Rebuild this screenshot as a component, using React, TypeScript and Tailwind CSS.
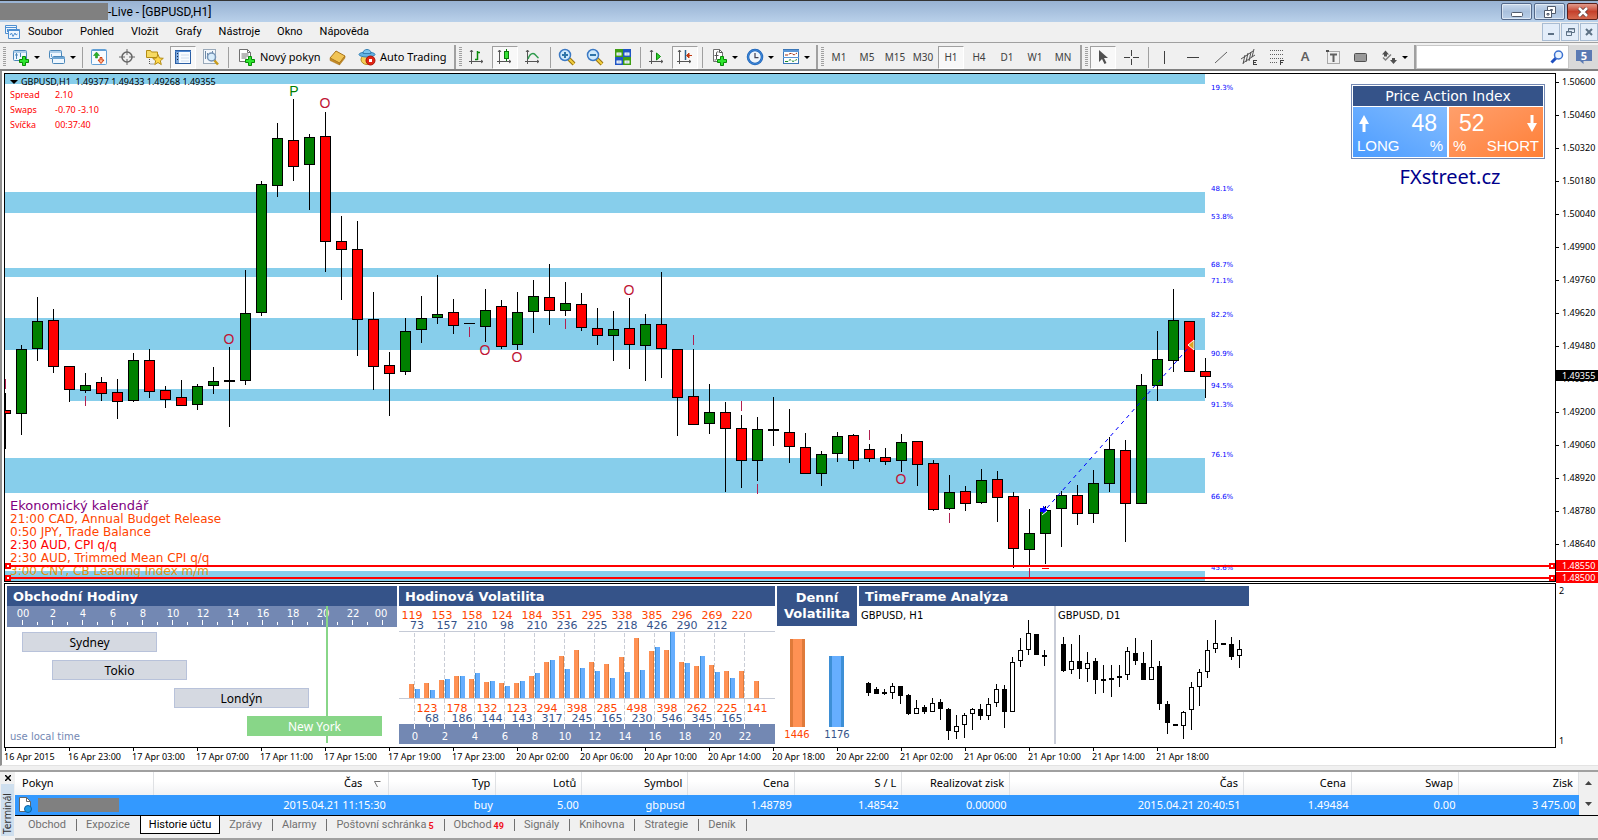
import React from 'react';

type Candle = [high: number, top: number, bottom: number, low: number, up: 0 | 1];

const menuItems = ['Soubor', 'Pohled', 'Vložit', 'Grafy', 'Nástroje', 'Okno', 'Nápověda'];
const timeframes = ['M1', 'M5', 'M15', 'M30', 'H1', 'H4', 'D1', 'W1', 'MN'];

const candles: Candle[] = [
  [393, 410, 414, 449, 0], [345, 349, 414, 435, 1], [297, 321, 349, 361, 1], [309, 320, 367, 373, 0],
  [366, 366, 390, 402, 0], [373, 385, 391, 393, 1], [377, 382, 394, 401, 0], [379, 392, 402, 419, 0],
  [353, 360, 401, 402, 1], [349, 360, 392, 398, 0], [386, 390, 400, 408, 0], [380, 397, 406, 406, 0],
  [384, 386, 405, 410, 1], [367, 381, 386, 394, 1], [347, 380, 382, 427, 1], [270, 313, 381, 385, 1],
  [181, 184, 313, 316, 1], [123, 138, 186, 197, 1], [99, 140, 167, 181, 0], [134, 137, 165, 210, 1],
  [112, 136, 242, 272, 0], [216, 241, 250, 300, 0], [221, 249, 320, 356, 0], [292, 319, 367, 390, 0],
  [352, 365, 374, 416, 0], [318, 331, 372, 375, 1], [296, 318, 330, 343, 1], [275, 314, 318, 324, 1],
  [299, 312, 326, 334, 0], [323, 323, 324, 324, 1], [289, 310, 327, 342, 1], [300, 306, 347, 349, 0],
  [292, 312, 345, 350, 1], [280, 296, 312, 333, 1], [264, 297, 311, 325, 0], [282, 303, 311, 316, 1],
  [293, 304, 328, 331, 0], [308, 328, 336, 345, 0], [311, 329, 336, 361, 1], [298, 328, 345, 369, 0],
  [314, 324, 346, 381, 1], [272, 324, 349, 378, 0], [349, 349, 398, 436, 0], [349, 396, 425, 425, 0],
  [384, 412, 424, 434, 1], [402, 412, 429, 492, 0], [415, 428, 461, 488, 0], [417, 429, 461, 481, 1],
  [397, 429, 431, 446, 1], [409, 432, 447, 463, 0], [433, 447, 474, 474, 0], [451, 454, 474, 486, 1],
  [432, 436, 454, 462, 1], [434, 435, 461, 469, 0], [444, 449, 459, 462, 0], [448, 457, 462, 465, 0],
  [434, 442, 461, 472, 1], [441, 441, 465, 486, 0], [460, 463, 510, 511, 0], [475, 492, 509, 510, 1],
  [486, 491, 504, 511, 0], [469, 480, 503, 504, 1], [471, 479, 498, 522, 0], [492, 496, 549, 568, 0],
  [509, 533, 550, 566, 1], [506, 510, 534, 564, 1], [491, 495, 509, 547, 1], [485, 495, 514, 525, 0],
  [470, 483, 514, 523, 1], [437, 449, 484, 492, 1], [440, 450, 504, 542, 0], [374, 385, 504, 504, 1],
  [331, 359, 386, 401, 1], [289, 320, 361, 372, 1], [321, 321, 372, 372, 0], [358, 371, 377, 398, 0],
];

// [x, top, height]
const bands = [
  [5, 74, 10], [5, 192, 21], [5, 268, 9], [5, 318, 32], [70, 389, 12], [5, 458, 35], [5, 571, 10],
];

const levels: [string, number][] = [
  ['19.3%', 88], ['48.1%', 189], ['53.8%', 217], ['68.7%', 265], ['71.1%', 281], ['82.2%', 315],
  ['90.9%', 354], ['94.5%', 386], ['91.3%', 405], ['76.1%', 455], ['66.6%', 497], ['45.6%', 568],
];

const circles = [[325, 103], [229, 339], [485, 350], [517, 357], [629, 290], [901, 479]];
const dashes = [
  [5, 379], [85, 396], [469, 327], [565, 319], [693, 335], [741, 401], [757, 484], [869, 430],
  [949, 513], [1029, 568],
];

const prices = [
  '1.50600', '1.50460', '1.50320', '1.50180', '1.50040', '1.49900', '1.49760', '1.49620', '1.49480',
  '1.49340', '1.49200', '1.49060', '1.48920', '1.48780', '1.48640',
];

const times = [
  '16 Apr 2015', '16 Apr 23:00', '17 Apr 03:00', '17 Apr 07:00', '17 Apr 11:00', '17 Apr 15:00',
  '17 Apr 19:00', '17 Apr 23:00', '20 Apr 02:00', '20 Apr 06:00', '20 Apr 10:00', '20 Apr 14:00',
  '20 Apr 18:00', '20 Apr 22:00', '21 Apr 02:00', '21 Apr 06:00', '21 Apr 10:00', '21 Apr 14:00',
  '21 Apr 18:00',
];

const news = [
  { text: '21:00 CAD, Annual Budget Release', color: 'text-[#ff4500]' },
  { text: '0:50 JPY, Trade Balance', color: 'text-[#ff4500]' },
  { text: '2:30 AUD, CPI q/q', color: 'text-[#ff0000]' },
  { text: '2:30 AUD, Trimmed Mean CPI q/q', color: 'text-[#ff4500]' },
  { text: '3:00 CNY, CB Leading Index m/m', color: 'text-[#e8930c]' },
];

const sessions = [
  { name: 'Sydney', start: 15, active: false },
  { name: 'Tokio', start: 45, active: false },
  { name: 'Londýn', start: 167, active: false },
  { name: 'New York', start: 240, active: true },
];

const hourlyOrange = [
  119, 123, 153, 178, 158, 132, 124, 123, 184, 294, 351, 398, 295, 285, 338, 498, 385, 398, 296, 262,
  269, 225, 220, 141,
];
const hourlyBlue = [
  73, 68, 157, 186, 210, 144, 98, 143, 210, 317, 236, 245, 225, 165, 218, 230, 426, 546, 290, 345,
  212, 165,
];

const miniH1: Candle[] = [
  [76, 77, 87, 90, 0], [81, 83, 88, 88, 0], [83, 86, 88, 89, 0], [77, 80, 87, 93, 1], [80, 80, 90, 98, 0],
  [88, 89, 108, 109, 0], [94, 102, 108, 108, 1], [99, 101, 106, 108, 0], [92, 97, 106, 106, 1],
  [93, 96, 103, 114, 0], [102, 103, 125, 134, 0], [109, 120, 126, 133, 1], [107, 109, 119, 132, 1],
  [102, 103, 108, 124, 1], [98, 103, 110, 114, 0], [92, 98, 110, 114, 1], [78, 83, 97, 101, 1],
  [79, 83, 106, 122, 0], [51, 56, 106, 106, 1], [32, 44, 55, 61, 1], [14, 27, 44, 49, 1],
  [28, 28, 49, 49, 0], [44, 49, 51, 60, 0],
];
const miniD1: Candle[] = [
  [31, 38, 65, 66, 0], [38, 55, 64, 68, 1], [29, 55, 63, 73, 0], [46, 57, 63, 76, 1], [52, 55, 74, 88, 0],
  [59, 73, 75, 87, 0], [59, 72, 74, 91, 0], [59, 70, 72, 81, 0], [41, 45, 69, 74, 1], [32, 47, 55, 59, 0],
  [46, 57, 74, 74, 0], [34, 61, 74, 74, 1], [55, 60, 98, 104, 0], [95, 98, 117, 128, 0],
  [118, 118, 120, 120, 0], [105, 106, 120, 133, 1], [76, 81, 104, 124, 1], [63, 66, 81, 100, 1],
  [34, 44, 66, 72, 1], [14, 37, 43, 47, 1], [37, 37, 39, 39, 0], [31, 38, 51, 54, 0], [34, 43, 50, 62, 1],
];

const columns = [
  { label: 'Pokyn', width: 139, value: '' },
  { label: 'Čas', width: 235, value: '2015.04.21 11:15:30' },
  { label: 'Typ', width: 107, value: 'buy' },
  { label: 'Lotů', width: 86, value: '5.00' },
  { label: 'Symbol', width: 106, value: 'gbpusd' },
  { label: 'Cena', width: 107, value: '1.48789' },
  { label: 'S / L', width: 107, value: '1.48542' },
  { label: 'Realizovat zisk', width: 108, value: '0.00000' },
  { label: 'Čas', width: 234, value: '2015.04.21 20:40:51' },
  { label: 'Cena', width: 108, value: '1.49484' },
  { label: 'Swap', width: 107, value: '0.00' },
  { label: 'Zisk', width: 120, value: '3 475.00' },
];

const tabs: { label: string; count?: string }[] = [
  { label: 'Obchod' }, { label: 'Expozice' }, { label: 'Historie účtu' }, { label: 'Zprávy' },
  { label: 'Alarmy' }, { label: 'Poštovní schránka', count: '5' }, { label: 'Obchod', count: '49' },
  { label: 'Signály' }, { label: 'Knihovna' }, { label: 'Strategie' }, { label: 'Deník' },
];

/* ---------- toolbar pieces ---------- */

function Icon({ size = 18, children }: { size?: number; children: React.ReactNode }) {
  return (
    <svg width={size} height={size} viewBox="0 0 18 18" fill="none" className="shrink-0" aria-hidden="true">
      {children}
    </svg>
  );
}

function ToolButton({ label, pressed, children }: { label: string; pressed?: boolean; children: React.ReactNode }) {
  return (
    <button
      type="button"
      aria-label={label}
      aria-pressed={pressed}
      className={
        'flex h-[23px] w-[26px] items-center justify-center text-[11px] text-[#404040] ' +
        (pressed ? 'border border-t-[#a0a0a0] border-l-[#a0a0a0] border-r-white border-b-white bg-[#f8f8f8]' : '')
      }
    >
      {children}
    </button>
  );
}

function DropButton({ label, children }: { label: string; children: React.ReactNode }) {
  return (
    <button type="button" aria-label={label} className="flex h-[23px] w-[34px] items-center gap-1 pl-1">
      {children}
      <svg width="6" height="3" className="shrink-0"><path d="M0 0h6L3 3z" fill="#000" /></svg>
    </button>
  );
}

function Separator() {
  return <span className="flex h-[21px] w-1 justify-center"><span className="w-px bg-[#a0a0a0]" /></span>;
}

function Group({ children }: { children: React.ReactNode }) {
  return (
    <div className="flex h-full items-center gap-0.5 border-r-2 border-[#a0a0a0] pr-1 pl-[3px]">
      <span className="h-[20px] w-[3px] bg-[repeating-linear-gradient(to_bottom,#a0a0a0_0_1px,transparent_1px_2px)]" />
      {children}
    </div>
  );
}

const plus = <path d="M10.500 8.500h3v3h3v3h-3v3h-3v-3h-3v-3h3z" fill="#2ee52e" stroke="#078a07" />;
const axes = <path d="M3.500 2v14M1 13.500h14M2 4l1.500-2L5 4M13 12l2 1.500-2 1.500" stroke="#555" />;

function Magnifier({ minus }: { minus?: boolean }) {
  return (
    <Icon>
      <path d="M11 11l5 5" stroke="#9a7410" strokeWidth="4" />
      <path d="M11 11l5 5" stroke="#f2cf3f" strokeWidth="2" />
      <circle cx="7" cy="7" r="5.500" fill="#cfe9fb" stroke="#3b79c4" strokeWidth="1.500" />
      <path d={minus ? 'M4 7h6' : 'M4 7h6M7 4v6'} stroke="#2f74a8" strokeWidth="2" />
    </Icon>
  );
}

function Toolbar() {
  return (
    <div className="flex h-[29px] items-center border-t border-b-2 border-t-[#a0a0a0] border-b-[#808080] bg-[#f0f0f0] pt-0.5">
      <Group>
        <DropButton label="Nový graf">
          <Icon>
            <rect x="1.500" y="2.500" width="13" height="10" rx="1" fill="#eef7ff" stroke="#4a86b8" />
            <path d="M1 4h14" stroke="#6fa6d4" />
            <path d="M4.500 5v6M3 7h3M8.500 5v4" stroke="#4a86b8" />
            {plus}
          </Icon>
        </DropButton>
        <DropButton label="Profily">
          <Icon>
            <rect x="1.500" y="2.500" width="12" height="8" rx="1" fill="#eef7ff" stroke="#4a86b8" />
            <path d="M1 4h13M3.500 6v3" stroke="#6fa6d4" />
            <rect x="4.500" y="8.500" width="12" height="7" rx="1" fill="#eef7ff" stroke="#4a86b8" />
            <path d="M4 10h13" stroke="#6fa6d4" strokeWidth="2" />
          </Icon>
        </DropButton>
        <Separator />
        <ToolButton label="Market Watch">
          <Icon>
            <rect x="1.500" y="1.500" width="15" height="15" rx="1" fill="#f7fbff" stroke="#62a0d6" />
            <path d="M2 2.500h14" stroke="#62a0d6" />
            <path d="M6.500 4l3 3.500h-2V10h-2V7.500h-2z" fill="#27b327" stroke="#118011" strokeWidth=".5" />
            <path d="M11 15.500l-3-3.500h2V9.500h2V12h2z" fill="#ffb08a" stroke="#d04010" />
          </Icon>
        </ToolButton>
        <ToolButton label="Datové okno">
          <Icon>
            <circle cx="9" cy="9" r="5" stroke="#666" strokeWidth="1.500" />
            <path d="M9 1v6M9 11v6M1 9h6M11 9h6" stroke="#666" />
          </Icon>
        </ToolButton>
        <ToolButton label="Navigátor">
          <Icon>
            <path d="M.500 2.500h4l1 1.500h6v5.500H.500z" fill="#f6da62" stroke="#b48c14" />
            <path d="M3.500 11v5h4" stroke="#555" strokeDasharray="1 1" />
            <path d="M12 6.500l1.500 3.500 3.800.300-3 2.500 1 3.800-3.300-2.100-3.300 2.100 1-3.800-3-2.500 3.800-.300z" fill="#ffd84a" stroke="#b48c14" />
          </Icon>
        </ToolButton>
        <ToolButton label="Terminál" pressed>
          <Icon>
            <rect x="1.500" y="2.500" width="15" height="13" fill="#f7fbff" stroke="#2b5fa5" />
            <path d="M1 3.500h16" stroke="#4c86d0" />
            <path d="M3.500 4v11" stroke="#7fa8da" strokeWidth="3" />
            <path d="M3.500 5v9" stroke="#10264a" strokeDasharray="1 2" />
            <path d="M7 7h8M7 10h8M7 13h8" stroke="#cfdcec" />
          </Icon>
        </ToolButton>
        <ToolButton label="Tester strategií">
          <Icon>
            <rect x="1.500" y="1.500" width="12" height="14" fill="#f3f7fb" stroke="#9aaaba" />
            <path d="M3.500 3v8M5.500 5v4M10.500 3v3" stroke="#6d8aa8" />
            <path d="M12 12l4 4.500" stroke="#c99c1c" strokeWidth="2.500" />
            <circle cx="9.500" cy="9" r="4" fill="#d7ecfb" stroke="#7593b5" strokeWidth="1.500" />
          </Icon>
        </ToolButton>
        <Separator />
        <button type="button" className="flex h-[23px] w-[90px] items-center gap-1 pl-[6px] text-[11px] whitespace-nowrap text-black">
          <Icon>
            <path d="M1.500 1.500h8l3 3v9h-11z" fill="#fff" stroke="#707070" />
            <path d="M9.500 1.500v3h3M3.500 6h7M3.500 8h7M3.500 10h5" stroke="#707070" />
            {plus}
          </Icon>
          Nový pokyn
        </button>
        <ToolButton label="MetaEditor">
          <Icon>
            <path d="M2 10L8 3l9 5-5.500 7z" fill="#f1c455" stroke="#a8741a" />
            <path d="M2 10v2.500l9.500 4.500V15zM11.500 17L17 10V8l-5.500 7z" fill="#c48a25" stroke="#a8741a" strokeWidth=".5" />
          </Icon>
        </ToolButton>
        <button type="button" className="flex h-[23px] w-[98px] items-center gap-1 pl-[6px] text-[11px] whitespace-nowrap text-black">
          <Icon>
            <ellipse cx="9" cy="11.500" rx="6" ry="5" fill="#f4cf55" stroke="#b68a1e" />
            <ellipse cx="9" cy="6.500" rx="8" ry="2.500" fill="#63b4e4" stroke="#3580b4" />
            <path d="M5 5.500C5 2.500 7 1.500 9 1.500s4 1 4 4z" fill="#7cc6f0" stroke="#3580b4" />
            <circle cx="12.500" cy="12.500" r="4.500" fill="#e02515" stroke="#a81208" />
            <rect x="11" y="11" width="3" height="3" fill="#fff" />
          </Icon>
          Auto Trading
        </button>
      </Group>

      <Group>
        <ToolButton label="Čárový graf">
          <Icon>{axes}<path d="M9.500 3v9M7 11.500h2.500M9.500 4.500H12" stroke="#0a8a0a" strokeWidth="1.500" /></Icon>
        </ToolButton>
        <ToolButton label="Svíčkový graf" pressed>
          <Icon>{axes}<path d="M10.500 1v12" stroke="#0a7a0a" /><rect x="8.500" y="3.500" width="4" height="7" fill="#35e035" stroke="#0a7a0a" /></Icon>
        </ToolButton>
        <ToolButton label="Liniový graf">
          <Icon>{axes}<path d="M4 11c1-3 2.500-5.500 5-5.500s3 3 5.500 4.500" stroke="#2d9a4b" strokeWidth="1.500" /></Icon>
        </ToolButton>
        <Separator />
        <ToolButton label="Přiblížit"><Magnifier /></ToolButton>
        <ToolButton label="Oddálit"><Magnifier minus /></ToolButton>
        <ToolButton label="Uspořádat okna">
          <Icon>
            <rect x="1" y="1" width="8" height="8" fill="#3f9e14" />
            <rect x="9" y="1" width="8" height="8" fill="#1f55c4" />
            <rect x="1" y="9" width="8" height="8" fill="#1f55c4" />
            <rect x="9" y="9" width="8" height="8" fill="#3f9e14" />
            <path d="M2.500 4.500h5v3h-5zM10.500 4.500h5v3h-5zM2.500 12.500h5v3h-5zM10.500 12.500h5v3h-5z" fill="#fff" />
            <path d="M3.500 6h3M11.500 6h3M3.500 14h3M11.500 14h3" stroke="#9db8d8" />
          </Icon>
        </ToolButton>
        <Separator />
        <ToolButton label="Automatický posun">
          <Icon>{axes}<path d="M8.500 5v7l4-3.500z" fill="#2fd12f" stroke="#0a8a0a" /></Icon>
        </ToolButton>
        <ToolButton label="Posun grafu" pressed>
          <Icon>{axes}<path d="M9.500 2v10" stroke="#27618f" strokeWidth="1.500" /><path d="M16 7.500h-5M13 5l-2.500 2.500L13 10z" fill="#c33a10" stroke="#c33a10" /></Icon>
        </ToolButton>
        <Separator />
        <DropButton label="Indikátory">
          <Icon>
            <path d="M3.500 1.500h6l3 3v9h-9z" fill="#fff" stroke="#707070" />
            <path d="M9.500 1.500v3h3M8.500 4c-2-.5-2 0-2 2v5c0 1-1 1-2 1M4.500 7.500h4" stroke="#555" />
            {plus}
          </Icon>
        </DropButton>
        <DropButton label="Periodicity">
          <Icon>
            <circle cx="9" cy="9" r="7" fill="#eef5fb" stroke="#1c62b8" strokeWidth="2.500" />
            <circle cx="9" cy="9" r="7" stroke="#4f9ae6" strokeWidth=".75" />
            <path d="M9 5v4.500h3.500" stroke="#445" strokeWidth="1.250" />
          </Icon>
        </DropButton>
        <DropButton label="Šablony">
          <Icon>
            <rect x="1.500" y="1.500" width="15" height="14" fill="#fff" stroke="#3b77b8" />
            <path d="M1 3h16" stroke="#5a96d6" strokeWidth="2" />
            <path d="M1 9.500h16" stroke="#5a96d6" />
            <path d="M3 7h3l2-1.500h2L12 7l3-2" stroke="#a03010" strokeDasharray="3 1" />
            <path d="M3 13.500h3l2-2 3 2 4-2" stroke="#1a8a2a" strokeDasharray="3 1" />
          </Icon>
        </DropButton>
      </Group>

      <Group>
        {timeframes.map((tf) => (
          <ToolButton key={tf} label={tf} pressed={tf === 'H1'}>
            <span className="text-[10px]">{tf}</span>
          </ToolButton>
        ))}
      </Group>

      <Group>
        <ToolButton label="Kurzor" pressed>
          <Icon><path d="M5 2v12l3-3 2.500 5 2-1-2.500-5h4z" fill="#505050" /></Icon>
        </ToolButton>
        <ToolButton label="Nitkový kříž">
          <Icon><path d="M9.500 2v6M9.500 11v6M2 9.500h6M11 9.500h6" stroke="#404040" /></Icon>
        </ToolButton>
        <Separator />
        <ToolButton label="Vertikální linka"><Icon><path d="M8.500 3v13" stroke="#404040" /></Icon></ToolButton>
        <ToolButton label="Horizontální linka"><Icon><path d="M3 9.500h12" stroke="#404040" /></Icon></ToolButton>
        <ToolButton label="Trendová linie"><Icon><path d="M3 15L15 4" stroke="#606060" /></Icon></ToolButton>
        <ToolButton label="Kanál">
          <Icon>
            <path d="M1 11L13 3M3 15L15 7M5 7l-2 9M8 5L6 14M11 4l-2 9M14 1l-2 8" stroke="#505050" />
            <path d="M13.500 17v-5M13 12.500h4M13 14.500h3M13 16.500h4" stroke="#404040" />
          </Icon>
        </ToolButton>
        <ToolButton label="Fibonacci">
          <Icon>
            <path d="M2 2.500h13M2 6.500h13M2 10.500h13M2 14.500h8" stroke="#606060" strokeDasharray="1 1" />
            <path d="M12.500 17v-5M12 12.500h4M12 14.500h3" stroke="#404040" />
          </Icon>
        </ToolButton>
        <ToolButton label="Text">
          <span className="text-[13px] font-semibold text-[#606060]">A</span>
        </ToolButton>
        <ToolButton label="Textový popisek">
          <Icon>
            <rect x="3.500" y="3.500" width="12" height="12" stroke="#606060" strokeDasharray="1 1" />
            <path d="M6 6.500h7M9.500 6v8" stroke="#606060" strokeWidth="2" />
            <path d="M2 2h3v2H2z" fill="#505050" />
          </Icon>
        </ToolButton>
        <ToolButton label="Obdélník">
          <Icon><rect x="2.500" y="5.500" width="12" height="8" rx="1" fill="#999" stroke="#505050" /></Icon>
        </ToolButton>
        <DropButton label="Šipky">
          <Icon>
            <path d="M5.500 2.500L9 6.500H7v2H4v-2H2z" fill="#505050" />
            <path d="M13.500 16L10 12h2v-2h3v2h2z" fill="#505050" />
            <path d="M3 9.500l2.500 2.500 5.500-5.500" stroke="#808080" strokeWidth="1.500" />
          </Icon>
        </DropButton>
      </Group>

      <div className="flex h-full flex-1 items-center">
        <label className="flex h-full flex-1 items-center border border-[#c8c8c8] bg-white pr-1">
          <input type="text" aria-label="Hledat" className="h-full w-0 flex-1 bg-transparent px-1 text-[11px] outline-none" />
          <svg width="14" height="14" viewBox="0 0 14 14" fill="none" aria-hidden="true">
            <path d="M6 8l-4.500 4.500" stroke="#1f4fc0" strokeWidth="3" />
            <circle cx="8.500" cy="5" r="4" fill="#eaf4ff" stroke="#3a70d0" strokeWidth="1.500" />
          </svg>
        </label>
        <button type="button" aria-label="Zprávy 5" className="flex h-full w-[29px] items-center justify-center bg-[#d9d9d9]">
          <svg width="18" height="18" viewBox="0 0 18 18" aria-hidden="true">
            <path d="M1 2h16v11H8.500v3L5 13H1z" fill="#5b7ab3" />
            <text x="9" y="12" fontSize="11" fontWeight="700" textAnchor="middle" fill="#fff">5</text>
          </svg>
        </button>
      </div>
    </div>
  );
}

/* ---------- window chrome ---------- */

const captionButton = 'flex h-[17px] w-[31px] items-center justify-center rounded-[2px] border border-[#54698a] bg-linear-to-b from-[#c9d9ec] via-[#a9c0dd] to-[#b9cfe9] shadow-[inset_0_0_0_1px_rgba(255,255,255,0.5)]';
const childButton = 'flex h-[18px] w-[18px] items-center justify-center border border-[#a9bcd2] bg-[#e3edf9]';

function TitleBar() {
  return (
    <header className="flex h-[22px] items-center border-t border-[#333] bg-linear-to-b from-[#98b2d3] to-[#b9d1ea]">
      <span className="h-[17px] w-[108px] bg-[#808080]" />
      <h1 className="flex-1 font-['Roboto',sans-serif] text-[12px] text-black">-Live - [GBPUSD,H1]</h1>
      <div className="flex gap-0.5">
        <button type="button" aria-label="Minimalizovat" className={captionButton}>
          <svg width="12" height="12"><rect x=".5" y="6.500" width="11" height="4" rx="1" fill="#fff" stroke="#505a6b" /></svg>
        </button>
        <button type="button" aria-label="Obnovit" className={captionButton}>
          <svg width="12" height="12" fill="#fff" stroke="#505a6b">
            <path d="M3.500.500h8v7h-8zM6.500 3.500h2v1h-2z" />
            <path d="M.500 4.500h7v7h-7zM3 7.500h2v1.500H3z" />
          </svg>
        </button>
        <button type="button" aria-label="Zavřít" className="flex h-[17px] w-[31px] items-center justify-center rounded-[2px] border border-[#5a1f1a] bg-linear-to-b from-[#e09a8c] via-[#c5402c] to-[#d5694f]">
          <svg width="12" height="10" fill="none">
            <path d="M2 1l8 8M10 1L2 9" stroke="#5a3a3a" strokeWidth="4" />
            <path d="M2 1l8 8M10 1L2 9" stroke="#fff" strokeWidth="2.500" />
          </svg>
        </button>
      </div>
    </header>
  );
}

function MenuBar() {
  return (
    <nav className="flex h-[20px] items-center bg-[#f0f0f0] pl-1">
      <svg width="16" height="16" viewBox="0 0 16 16" fill="#eef6ff" stroke="#4f8fd0" aria-hidden="true">
        <path d="M1.500 1.500h11v8h-11zM1 3.500h12M3.500 5v3" />
        <path d="M4.500 5.500h11v9h-11z" />
        <path d="M4 6.500h12M6 11l1.500-2 1.500 3.500L11 9l1 2 1.500-1" fill="none" />
      </svg>
      <div className="flex flex-1 gap-[17px] pl-2 font-['Roboto',sans-serif] text-[11px] text-black">
        {menuItems.map((item) => (
          <button key={item} type="button" className="leading-[20px]">{item}</button>
        ))}
      </div>
      <div className="flex gap-px">
        <button type="button" aria-label="Minimalizovat graf" className={childButton}>
          <svg width="8" height="8"><rect x="1" y="5" width="6" height="2" fill="#5d7185" /></svg>
        </button>
        <button type="button" aria-label="Obnovit graf" className={childButton}>
          <svg width="9" height="8" fill="none" stroke="#5d7185"><path d="M2.500 3V.500h6v4H6M2 1h7M.500 3.500h5v4h-5zM0 4h6" /></svg>
        </button>
        <button type="button" aria-label="Zavřít graf" className={childButton}>
          <svg width="8" height="8"><path d="M1 1l6 6M7 1L1 7" stroke="#5d7185" strokeWidth="2" /></svg>
        </button>
      </div>
    </nav>
  );
}

/* ---------- price chart ---------- */

function CandleShape({ x, half, candle, up, down }: { x: number; half: number; candle: Candle; up: string; down: string }) {
  const [high, top, bottom, low, isUp] = candle;
  return (
    <g>
      <rect x={x} y={high} width={1} height={Math.max(low - high, 1)} fill="#000" />
      <rect x={x - half} y={top} width={half * 2 + 1} height={bottom - top} fill="#000" />
      {bottom - top > 2 && (
        <rect x={x - half + 1} y={top + 1} width={half * 2 - 1} height={bottom - top - 2} fill={isUp ? up : down} />
      )}
    </g>
  );
}

function PriceActionIndex() {
  return (
    <div className="w-[194px] border border-[#7388b3] bg-white p-px">
      <div className="h-5 bg-[#355389] text-center font-['DejaVu_Sans',sans-serif] text-[14px] leading-[20px] text-white">
        Price Action Index
      </div>
      <div className="mt-px flex gap-0.5 font-['Liberation_Sans',sans-serif] text-white">
        <div className="flex h-[50px] flex-1 flex-col justify-between bg-linear-to-tr from-[#4a9bff] to-[#82bcff] px-1 pt-1 pb-[3px]">
          <div className="flex items-center justify-between pr-1.5">
            <svg width="14" height="20" className="mt-0.5"><path d="M7 1l5 9H8.500v8h-3v-8H2z" fill="#fff" /></svg>
            <span className="text-[23px] leading-[24px]">48</span>
          </div>
          <div className="flex justify-between text-[15px] leading-[16px]"><span>LONG</span><span>%</span></div>
        </div>
        <div className="flex h-[50px] flex-1 flex-col justify-between bg-linear-to-br from-[#ff9f6b] to-[#ff7f35] px-1 pt-1 pb-[3px]">
          <div className="flex items-center justify-between pl-1.5">
            <span className="text-[23px] leading-[24px]">52</span>
            <svg width="14" height="20" className="mt-0.5"><path d="M7 18l5-9H8.500V1h-3v8H2z" fill="#fff" /></svg>
          </div>
          <div className="flex justify-between text-[15px] leading-[16px]"><span>%</span><span>SHORT</span></div>
        </div>
      </div>
    </div>
  );
}

function PriceChart() {
  return (
    <section className="relative h-[509px] overflow-hidden border border-black bg-white" aria-label="GBPUSD H1">
      <svg className="block h-full w-full" shapeRendering="crispEdges">
        <g transform="translate(-5 -74)">
          {bands.map(([x, y, h]) => (
            <rect key={y} x={x} y={y} width={1205 - x} height={h} fill="#87ceeb" />
          ))}
          {candles.map((c, i) => (
            <CandleShape key={i} x={5 + i * 16} half={5} candle={c} up="#008000" down="#ff0000" />
          ))}
          <g fontFamily="DejaVu Sans, sans-serif" fontSize="7" fill="#0000ff">
            {levels.map(([label, y]) => (
              <text key={label} x={1211} y={y + 2}>{label}</text>
            ))}
          </g>
          <g fontFamily="Liberation Sans, sans-serif" fontSize="14" fill="#c01535" textAnchor="middle">
            {circles.map(([x, y]) => (
              <text key={x} x={x} y={y + 5}>O</text>
            ))}
            <text x={294} y={96} fill="#008000">P</text>
          </g>
          {dashes.map(([x, y]) => (
            <rect key={x} x={x} y={y} width={1} height={10} fill="#b02050" />
          ))}
          <rect x={1042} y={568} width={7} height={1} fill="#f00" />
          <path d="M1047 508L1190 346" stroke="#0000ff" strokeDasharray="4 4" fill="none" shapeRendering="auto" />
          <path d="M1040 508h3v-2l5 4-5 4v-2h-3z" fill="#0000ff" />
          <path d="M1042 515l5-4" stroke="#fff" shapeRendering="auto" />
          <path d="M1188 345l6-5v10z" fill="#daa520" stroke="#fff" shapeRendering="auto" />
        </g>
      </svg>

      <div className="absolute top-0 left-[5px] text-[9px] leading-[15px] text-black">
        <p className="flex h-[13px] items-center gap-[3px] pt-0.5 whitespace-pre">
          <svg width="8" height="4"><path d="M0 0h8L4 4z" /></svg>
          GBPUSD,H1  1.49377 1.49433 1.49268 1.49355
        </p>
        <dl className="grid grid-cols-[45px_auto] text-[#ff0000]">
          <dt>Spread</dt><dd>2.10</dd>
          <dt>Swaps</dt><dd>-0.70 -3.10</dd>
          <dt>Svíčka</dt><dd>00:37:40</dd>
        </dl>
      </div>

      <div className="absolute top-2.5 right-2.5 flex flex-col items-center">
        <PriceActionIndex />
        <p className="mt-1 pl-1 text-[20px] leading-[28px] text-[#00008b]">FXstreet.cz</p>
      </div>

      <div className="absolute bottom-[3px] left-[5px] font-['DejaVu_Sans',sans-serif] text-[12px] leading-[13px]">
        <h2 className="text-[13px] leading-[15px] text-[#800080]">Ekonomický kalendář</h2>
        {news.map((n) => (
          <p key={n.text} className={n.color}>{n.text}</p>
        ))}
      </div>

      {/* stop and entry levels */}
      <div className="absolute inset-x-0 bottom-3 flex h-1.5 items-center justify-between">
        <span className="absolute inset-x-0 h-0.5 bg-[#ff0000]" />
        <span className="relative h-1.5 w-1.5 border-2 border-[#ff0000] bg-white" />
        <span className="relative h-1.5 w-1.5 border-2 border-[#ff0000] bg-white" />
      </div>
      <div className="absolute inset-x-0 bottom-0 flex h-1.5 items-center justify-between">
        <span className="absolute inset-x-0 h-0.5 bg-[#ff0000]" />
        <span className="relative h-1.5 w-1.5 border-2 border-[#ff0000] bg-white" />
        <span className="relative h-1.5 w-1.5 border-2 border-[#ff0000] bg-white" />
      </div>
    </section>
  );
}

function PriceScale() {
  return (
    <svg className="h-[675px] w-[42px] shrink-0" fontSize="9" fill="#000" aria-label="Cenová osa">
      {prices.map((p, i) => (
        <g key={p}>
          <rect x={0} y={9 + i * 33} width={3} height={1} />
          <text x={6} y={12 + i * 33}>{p}</text>
        </g>
      ))}
      <rect x={0} y={297} width={42} height={11} />
      <text x={6} y={306} fill="#fff">1.49355</text>
      <rect x={0} y={487} width={42} height={11} fill="#f00" />
      <text x={6} y={496} fill="#fff">1.48550</text>
      <rect x={0} y={499} width={42} height={11} fill="#f00" />
      <text x={6} y={508} fill="#fff">1.48500</text>
      <text x={3} y={521}>2</text>
      <text x={3} y={671}>1</text>
    </svg>
  );
}

/* ---------- indicator panels ---------- */

const panelTitle = "h-5 bg-[#355389] pl-1.5 font-['DejaVu_Sans',sans-serif] text-[13px] font-bold leading-[21px] text-white";

function TradingHours() {
  const hours = ['00', '2', '4', '6', '8', '10', '12', '14', '16', '18', '20', '22', '00'];
  return (
    <section className="relative w-[390px]">
      <h2 className={panelTitle}>Obchodní Hodiny</h2>
      <svg className="block h-[21px] w-full bg-[#7388b3]" fontFamily="DejaVu Sans, sans-serif" fontSize="10" fill="#fff" textAnchor="middle">
        {hours.map((h, i) => (
          <text key={i} x={(i === 12 ? 14 : 16) + i * 30} y={11}>{h}</text>
        ))}
        {Array.from({ length: 25 }, (_, i) => (
          <rect key={i} x={15 + i * 15} y={i % 2 ? 16 : 14} width={1} height={i % 2 ? 3 : 5} />
        ))}
      </svg>
      <span className="absolute top-5 left-[319px] h-[137px] w-0.5 bg-[#88d688]" />
      <div className="relative flex flex-col gap-2 pt-[5px]">
        {sessions.map((s) => (
          <div
            key={s.name}
            style={{ marginLeft: s.start }}
            className={
              'h-5 w-[135px] border text-center text-[12px] leading-[19px] ' +
              (s.active ? 'border-[#88d688] bg-[#88d688] text-white' : 'border-[#b8c2da] bg-[#d5d9e1] text-black')
            }
          >
            {s.name}
          </div>
        ))}
      </div>
      <a href="#local" className="absolute bottom-[3px] left-[3px] font-['DejaVu_Sans',sans-serif] text-[10px] leading-[14px] text-[#7388b3]">
        use local time
      </a>
    </section>
  );
}

function HourlyVolatility() {
  const scale = 66 / 546;
  return (
    <section className="w-[376px]">
      <h2 className={panelTitle}>Hodinová Volatilita</h2>
      <svg className="block h-[138px] w-full" shapeRendering="crispEdges" fontFamily="DejaVu Sans, sans-serif" textAnchor="middle">
        <path d="M0 25.500h376M0 92.500h376" stroke="#c5cad6" />
        {Array.from({ length: 12 }, (_, i) => (
          <path key={i} d={`M${15.5 + i * 30} 27V118`} stroke="#c9cdd6" strokeDasharray="4 2" />
        ))}
        {hourlyOrange.map((v, i) => {
          const h = Math.round(v * scale);
          return (
            <g key={i}>
              <rect x={10 + i * 15} y={92 - h} width={5} height={h} fill="#ff9154" />
              <rect x={14 + i * 15} y={92 - h} width={1} height={h} fill="#e07a3a" />
            </g>
          );
        })}
        {hourlyBlue.map((v, i) => {
          const h = Math.round(v * scale);
          return (
            <g key={i}>
              <rect x={16 + i * 15} y={92 - h} width={5} height={h} fill="#66aeff" />
              <rect x={16 + i * 15} y={92 - h} width={1} height={h} fill="#3d8fd6" />
            </g>
          );
        })}
        <g fontSize="11">
          {hourlyOrange.map((v, i) => (
            <text key={i} x={13 + i * 15} y={i % 2 ? 106 : 13} fill="#ff4500">{v}</text>
          ))}
          {hourlyBlue.map((v, i) => (
            <text key={i} x={18 + i * 15} y={i % 2 ? 116 : 23} fill="#355389">{v}</text>
          ))}
        </g>
        <rect x={0} y={118} width={376} height={20} fill="#7388b3" />
        <g fontSize="10" fill="#fff">
          {Array.from({ length: 24 }, (_, i) => (
            <rect key={i} x={15 + i * 15} y={118} width={1} height={i % 2 ? 3 : 5} />
          ))}
          {Array.from({ length: 12 }, (_, i) => (
            <text key={i} x={16 + i * 30} y={134}>{i * 2}</text>
          ))}
        </g>
      </svg>
    </section>
  );
}

function DailyVolatility() {
  return (
    <section className="w-[80px]">
      <h2 className="h-10 bg-[#355389] pt-1 text-center font-['DejaVu_Sans',sans-serif] text-[13px] font-bold leading-[16px] text-white">
        Denní Volatilita
      </h2>
      <svg className="block h-[118px] w-full" shapeRendering="crispEdges" fontFamily="DejaVu Sans, sans-serif" fontSize="10" textAnchor="middle">
        <rect x={13} y={13} width={15} height={88} fill="#e07a3a" />
        <rect x={16} y={13} width={9} height={88} fill="#ff9154" />
        <rect x={52} y={30} width={15} height={71} fill="#3d8fd6" />
        <rect x={55} y={30} width={9} height={71} fill="#66aeff" />
        <text x={20} y={112} fill="#ff4500">1446</text>
        <text x={60} y={112} fill="#355389">1176</text>
      </svg>
    </section>
  );
}

function TimeFrameAnalysis() {
  return (
    <section className="w-[390px]">
      <h2 className={panelTitle}>TimeFrame Analýza</h2>
      <svg className="block h-[138px] w-full" shapeRendering="crispEdges" fontSize="10">
        <text x={2} y={13} fontFamily="DejaVu Sans, sans-serif">GBPUSD, H1</text>
        <text x={199} y={13} fontFamily="DejaVu Sans, sans-serif">GBPUSD, D1</text>
        <rect x={195} y={0} width={2} height={138} fill="#c9cdd8" />
        {miniH1.map((c, i) => (
          <CandleShape key={i} x={9 + i * 8} half={2} candle={c} up="#fff" down="#000" />
        ))}
        {miniD1.map((c, i) => (
          <CandleShape key={i} x={204 + i * 8} half={2} candle={c} up="#fff" down="#000" />
        ))}
      </svg>
    </section>
  );
}

function TimeAxis() {
  return (
    <svg className="block h-[17px] w-full" fontSize="9" fill="#000" aria-label="Časová osa">
      {times.map((t, i) => (
        <g key={t}>
          <rect x={1 + i * 64} y={0} width={1} height={3} />
          <text x={i * 64} y={12}>{t}</text>
        </g>
      ))}
    </svg>
  );
}

/* ---------- terminal ---------- */

function Terminal() {
  return (
    <section className="flex border-t-2 border-[#a0a0a0] bg-[#f0f0f0]" aria-label="Terminál">
      <div className="flex w-[15px] flex-col items-center">
        <button type="button" aria-label="Zavřít terminál" className="flex h-3 items-center">
          <svg width="6" height="6"><path d="M0 0l6 6M6 0L0 6" stroke="#000" strokeWidth="1.500" /></svg>
        </button>
        <span className="h-[52px] w-[13px] rotate-180 bg-[#cfdfee] pt-0.5 text-[10px] leading-[13px] text-[#333] [writing-mode:vertical-rl]">
          Terminál
        </span>
      </div>
      <div className="min-w-0 flex-1">
        <div className="flex border-b border-black">
          <table className="min-w-0 flex-1 table-fixed border-collapse text-[11px]">
            <colgroup>
              {columns.map((c, i) => (
                <col key={i} style={{ width: c.width }} />
              ))}
            </colgroup>
            <thead>
              <tr className="h-[23px] bg-linear-to-b from-white from-40% to-[#f1f2f4] text-right">
                {columns.map((c, i) => (
                  <th key={i} className={'border-r border-[#dfe1e4] p-0 font-normal ' + (i === 0 ? 'pl-[7px] text-left' : 'pr-[5px]')}>
                    {c.label}
                    {i === 1 && (
                      <svg width="7" height="7" className="mr-0.5 ml-3 inline" fill="none"><path d="M6.500.500H.500L3.500 6" stroke="#707070" /></svg>
                    )}
                  </th>
                ))}
              </tr>
            </thead>
            <tbody>
              <tr className="h-5 bg-[#3399ff] text-right text-white">
                {columns.map((c, i) => (
                  <td key={i} className="p-0 pr-[3px]">
                    {i === 0 ? (
                      <span className="flex items-center gap-1.5 pl-1">
                        <svg width="13" height="16" viewBox="0 0 13 16">
                          <path d="M.500.500h7l4 4v10H.500z" fill="#fff" stroke="#666" />
                          <path d="M7.500.500v4h4" fill="none" stroke="#666" />
                          <circle cx="9" cy="12" r="3.500" fill="#1e9be6" stroke="#0a5fa5" />
                        </svg>
                        <span className="h-[14px] w-[81px] bg-[#808080]" />
                      </span>
                    ) : (
                      c.value
                    )}
                  </td>
                ))}
              </tr>
            </tbody>
          </table>
          <div className="flex w-[19px] flex-col items-center justify-between py-[9px]">
            <svg width="7" height="4"><path d="M0 4h7L3.500 0z" fill="#444" /></svg>
            <svg width="7" height="4"><path d="M0 0h7L3.500 4z" fill="#444" /></svg>
          </div>
        </div>
        <div className="flex h-[18px] items-center pl-1 font-['Roboto',sans-serif] text-[11px] text-[#707070]" role="tablist">
          {tabs.map((tab, i) => {
            const active = i === 2;
            return (
              <button
                key={i}
                type="button"
                role="tab"
                aria-selected={active}
                className={
                  active
                    ? 'h-full border-x border-b border-black bg-white px-2 leading-[16px] text-black'
                    : 'flex items-center pl-[9px] leading-[16px]'
                }
              >
                {tab.label}
                {tab.count && <span className="pt-0.5 pl-0.5 text-[9px] font-bold text-[#f01020]">{tab.count}</span>}
                {!active && i !== 1 && <span className="ml-[10px] h-3 w-px bg-[#707070]" />}
                {i === 1 && <span className="w-[10px]" />}
              </button>
            );
          })}
        </div>
        <div className="mt-1 h-0.5 bg-[#a0a0a0]" />
      </div>
    </section>
  );
}

export default function App() {
  return (
    <div className="min-h-screen overflow-hidden bg-[#f0f0f0] font-['Noto_Sans',sans-serif]">
      <TitleBar />
      <MenuBar />
      <Toolbar />
      <main className="border-b border-l-2 border-b-[#e3e3e3] border-l-[#909090] bg-white pt-0.5 pl-0.5">
        <div className="flex">
          <div className="min-w-0 flex-1">
            <PriceChart />
            <div className="mt-px flex h-[165px] gap-0.5 border border-black pt-0.5 pl-0.5">
              <TradingHours />
              <HourlyVolatility />
              <DailyVolatility />
              <TimeFrameAnalysis />
            </div>
          </div>
          <PriceScale />
        </div>
        <TimeAxis />
      </main>
      <div className="h-1" />
      <Terminal />
    </div>
  );
}
